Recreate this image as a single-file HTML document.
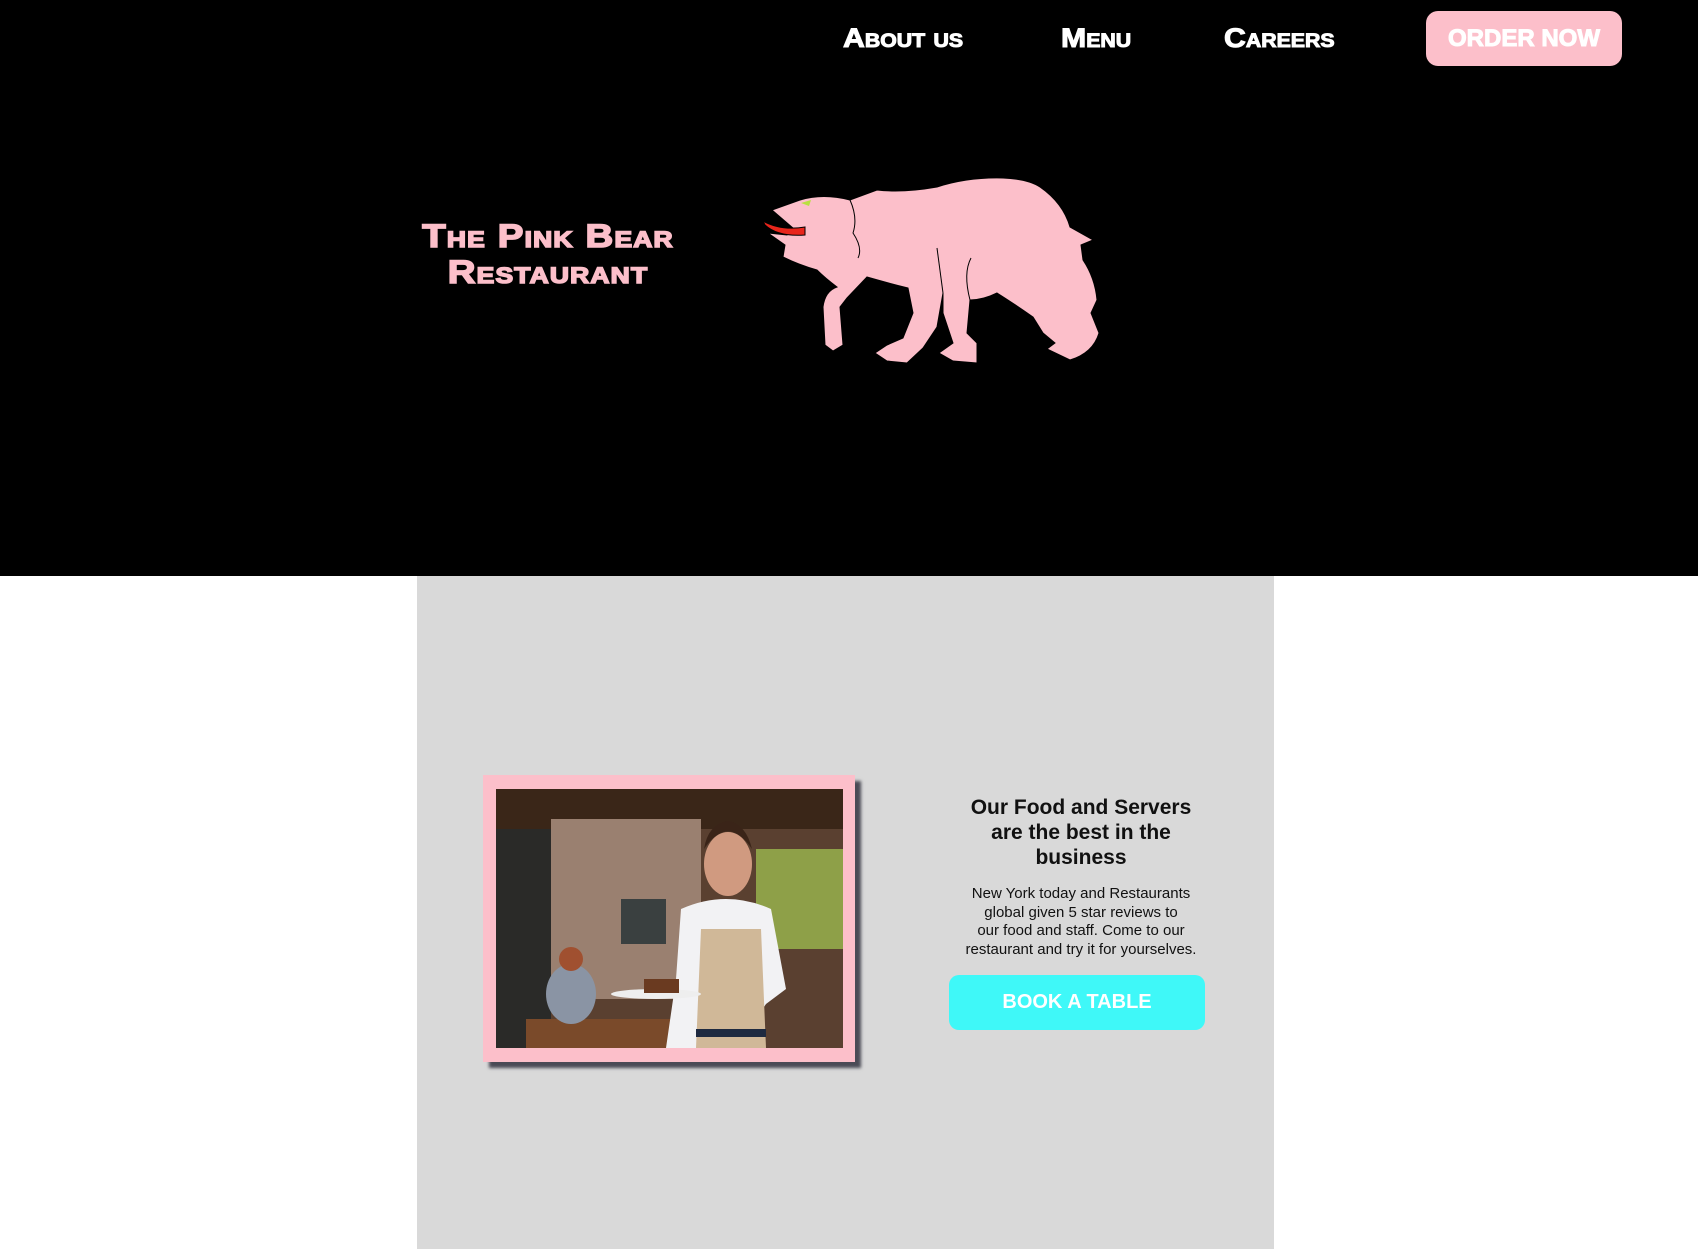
<!DOCTYPE html>
<html><head><meta charset="utf-8"><style>
*{margin:0;padding:0;box-sizing:border-box}
body{width:1698px;height:1249px;background:#fff;position:relative;overflow:hidden;font-family:"Liberation Sans",sans-serif}
#hdr{position:absolute;left:0;top:0;width:1698px;height:576px;background:#000}
.nav{position:absolute;top:22px;color:#fff;font-weight:900;font-size:27px;font-variant:small-caps;line-height:32px;transform-origin:0 50%;transform:scaleX(1.12);-webkit-text-stroke:1px #fff}
#order{position:absolute;left:1426px;top:11px;width:196px;height:55px;background:#fcbfca;border-radius:12px;color:#fff;font-weight:900;font-size:24px;text-align:center;line-height:55px;-webkit-text-stroke:1px #fff}
#title{position:absolute;left:398px;top:218px;width:300px;text-align:center;color:#fcbfca;font-weight:900;font-size:32px;font-variant:small-caps;line-height:36px;letter-spacing:1px;-webkit-text-stroke:1.5px #fcbfca;transform:scaleX(1.2);transform-origin:50% 50%}
#gray{position:absolute;left:417px;top:576px;width:857px;height:673px;background:#d9d9d9}
#frame{position:absolute;left:483px;top:775px;width:372px;height:287px;background:#fcbfca;box-shadow:6px 6px 3px #4a4a55}
#photo{position:absolute;left:13px;top:14px;width:347px;height:259px}
#h{position:absolute;left:931px;top:795px;width:300px;text-align:center;font-weight:bold;font-size:21px;line-height:25px;color:#111}
#p{position:absolute;left:931px;top:885px;width:300px;text-align:center;font-size:15px;line-height:18.5px;color:#111}
#btn{position:absolute;left:949px;top:975px;width:256px;height:55px;background:#3ff8f8;border-radius:10px;color:#fff;font-weight:bold;font-size:20px;text-align:center;line-height:55px}
</style></head><body>
<div id="hdr">
<div class="nav" style="left:843px">About us</div>
<div class="nav" style="left:1061px">Menu</div>
<div class="nav" style="left:1224px">Careers</div>
<div id="order">ORDER NOW</div>
<div id="title">The Pink Bear<br>Restaurant</div>
<svg style="position:absolute;left:763px;top:173px" width="345" height="200" viewBox="0 0 345 200">
<path fill="#fcbfca" stroke="#000" stroke-width="1" d="M9 37 L37 27 Q60 20 87 27 L114 17 Q140 20 174 14 Q205 4 240 5 Q265 6 277 14 Q300 30 307 54 L330 67 L318 72 L320 87 Q332 105 334 127 L328 140 L336 160 Q330 180 307 187 L284 176 L292 170 L280 160 L270 144 Q250 130 234 120 Q220 127 207 127 L204 160 L214 170 L214 190 L190 188 L176 180 L190 170 L180 140 L180 120 L174 154 L160 175 L144 190 L124 188 L112 180 L124 172 L140 165 L150 140 L145 115 Q125 110 104 104 L84 125 L77 134 L80 172 L70 178 L62 172 L60 134 Q62 118 74 114 Q62 105 54 97 Q36 92 20 84 L22 72 L5 60 L24 62 L30 55 Z"/>
<g fill="none" stroke="#000" stroke-width="1"><path d="M87 27 Q95 45 90 60 Q100 75 95 85"/><path d="M180 120 L174 75"/><path d="M207 127 Q200 100 208 85"/></g>
<path d="M0 48 Q18 58 42 54 L42 62 Q15 64 2 52 Z" fill="#e8251b" stroke="#000" stroke-width="1"/>
<path d="M38 30 L48 27 L46 33 Z" fill="#b8e040"/>
</svg>
</div>
<div id="gray"></div>
<div id="frame">
<svg id="photo" viewBox="0 0 347 259" preserveAspectRatio="none">
<rect width="347" height="259" fill="#5a4030"/>
<rect width="347" height="40" fill="#3a2618"/>
<rect x="55" y="30" width="150" height="180" fill="#9a8070"/>
<rect x="0" y="40" width="55" height="219" fill="#2a2a28"/>
<rect x="260" y="60" width="87" height="100" fill="#8ea048"/>
<rect x="125" y="110" width="45" height="45" fill="#3a4040"/>
<rect x="30" y="230" width="200" height="29" fill="#7a4a2a"/>
<ellipse cx="75" cy="205" rx="25" ry="30" fill="#8a94a4"/>
<circle cx="75" cy="170" r="12" fill="#a05030"/>
<path d="M185 120 Q230 100 275 120 L290 200 L270 215 L240 259 L170 259 L180 190 Z" fill="#f2f2f4"/>
<path d="M205 140 L265 140 L270 259 L200 259 Z" fill="#d0b898"/>
<rect x="200" y="240" width="70" height="8" fill="#1e2a40"/>
<ellipse cx="232" cy="75" rx="24" ry="32" fill="#d09a80"/>
<path d="M208 60 Q232 25 256 60 Q250 35 232 32 Q212 35 208 60Z" fill="#3a2418"/>
<ellipse cx="160" cy="205" rx="45" ry="5" fill="#eee"/>
<rect x="148" y="190" width="35" height="14" fill="#6a3a20"/>
</svg>
</div>
<div id="h">Our Food and Servers<br>are the best in the<br>business</div>
<div id="p">New York today and Restaurants<br>global given 5 star reviews to<br>our food and staff. Come to our<br>restaurant and try it for yourselves.</div>
<div id="btn">BOOK A TABLE</div>
</body></html>
